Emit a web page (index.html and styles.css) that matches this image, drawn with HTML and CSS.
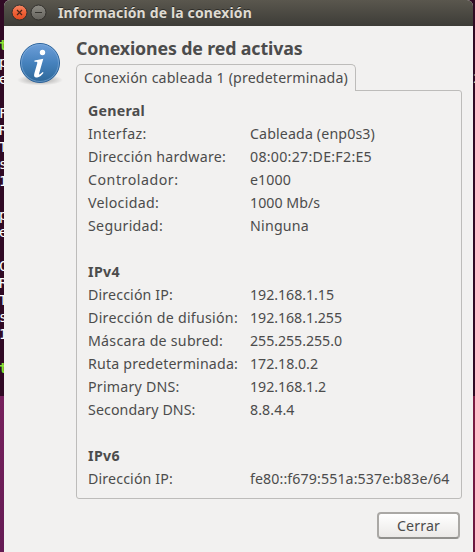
FILE: index.html
```html
<!DOCTYPE html>
<html lang="es">
<head>
<meta charset="utf-8">
<title>Información de la conexión</title>
<link rel="stylesheet" href="styles.css">
</head>
<body>
<div class="desktop">
  <div class="terminal">
    <pre class="output"><b>t</b>
p
e

F
R
T
s
1

p
e

C
R
T
s
1

<b>t</b></pre>
  </div>
  <div class="terminal-edge"><span>2</span></div>
  <main class="window">
    <header class="titlebar">
      <svg class="control" viewBox="0 0 17 17">
        <defs>
          <linearGradient id="close" x2="0" y2="1"><stop stop-color="#f58765"/><stop offset=".5" stop-color="#ef6238"/><stop offset="1" stop-color="#df4b22"/></linearGradient>
          <linearGradient id="mini" x2="0" y2="1"><stop stop-color="#8e8c85"/><stop offset="1" stop-color="#64625c"/></linearGradient>
        </defs>
        <circle cx="8.5" cy="8.5" r="7.5" fill="url(#close)" stroke="#33312d"/>
        <path d="M6 6l5 5M11 6l-5 5" stroke="#4d2518" stroke-width="1.2"/>
      </svg>
      <svg class="control" viewBox="0 0 17 17">
        <circle cx="8.5" cy="8.5" r="7.5" fill="url(#mini)" stroke="#33312d"/>
        <path d="M5 8.5h7" stroke="#34332e"/>
      </svg>
      <h1 class="title"><span data-width="194">Información de la conexión</span></h1>
    </header>
    <div class="content">
      <svg class="info" viewBox="0 0 48 48">
        <defs>
          <linearGradient id="blue" x2="0" y2="1"><stop stop-color="#6e9fd9"/><stop offset=".5" stop-color="#4682bd"/><stop offset="1" stop-color="#2d6798"/></linearGradient>
          <radialGradient id="shade"><stop stop-color="#000" stop-opacity=".35"/><stop offset="1" stop-color="#000" stop-opacity="0"/></radialGradient>
        </defs>
        <ellipse cx="24" cy="40" rx="23" ry="5.5" fill="url(#shade)"/>
        <circle cx="24" cy="23" r="19.5" fill="url(#blue)" stroke="#2c639b"/>
        <circle cx="24" cy="23" r="18.5" fill="none" stroke="#8ab4e0" stroke-opacity=".55"/>
        <circle cx="26.5" cy="12.5" r="2.7" fill="#fff"/>
        <path d="M18.5 20.6l8.8-1.8-4.1 14.4c-.5 2 .6 1.7 3.5-1.2l.9.8c-3.2 4.3-6 5-7.7 4.7-1.8-.3-2.2-1.9-1.5-4.3l2.8-9.8c.5-1.7-.5-1.8-2.8-1.6z" fill="#fff"/>
      </svg>
      <section class="connections">
        <h2 class="heading"><span data-width="226.5">Conexiones de red activas</span></h2>
        <div class="tab"><span data-width="264">Conexión cableada 1 (predeterminada)</span></div>
        <div class="panel">
          <h3><span data-width="57">General</span></h3>
          <dl>
            <dt><span data-width="58.5">Interfaz:</span></dt><dd><span data-width="125">Cableada (enp0s3)</span></dd>
            <dt><span data-width="138">Dirección hardware:</span></dt><dd><span data-width="122">08:00:27:DE:F2:E5</span></dd>
            <dt><span data-width="90.5">Controlador:</span></dt><dd><span data-width="41">e1000</span></dd>
            <dt><span data-width="71">Velocidad:</span></dt><dd><span data-width="70">1000 Mb/s</span></dd>
            <dt><span data-width="75">Seguridad:</span></dt><dd><span data-width="59">Ninguna</span></dd>
          </dl>
          <h3><span data-width="32">IPv4</span></h3>
          <dl>
            <dt><span data-width="85">Dirección IP:</span></dt><dd><span data-width="84">192.168.1.15</span></dd>
            <dt><span data-width="150">Dirección de difusión:</span></dt><dd><span data-width="92">192.168.1.255</span></dd>
            <dt><span data-width="135">Máscara de subred:</span></dt><dd><span data-width="92">255.255.255.0</span></dd>
            <dt><span data-width="150">Ruta predeterminada:</span></dt><dd><span data-width="68">172.18.0.2</span></dd>
            <dt><span data-width="91.5">Primary DNS:</span></dt><dd><span data-width="76">192.168.1.2</span></dd>
            <dt><span data-width="107.5">Secondary DNS:</span></dt><dd><span data-width="44.5">8.8.4.4</span></dd>
          </dl>
          <h3><span data-width="32">IPv6</span></h3>
          <dl>
            <dt><span data-width="85">Dirección IP:</span></dt><dd><span data-width="199.5">fe80::f679:551a:537e:b83e/64</span></dd>
          </dl>
        </div>
        <button class="close-button"><span data-width="43">Cerrar</span></button>
      </section>
    </div>
  </main>
</div>
<script src="script.js"></script>
</body>
</html>
```
FILE: styles.css
```css
* { box-sizing: border-box; }
body {
  margin: 0;
  font: 14.2px/23px "Noto Sans", sans-serif;
  color: #4c4c4c;
}
.desktop {
  position: relative;
  width: 475px;
  height: 552px;
  padding: 0 2px 0 4px;
  overflow: hidden;
  background: linear-gradient(#77215d, #651b54) 0 396px / 4px 156px no-repeat, linear-gradient(#7b1c42, #6b1740) 473px 396px / 2px 156px no-repeat, #300a24;
}
.terminal {
  position: absolute;
  left: 0;
  top: 0;
  width: 5px;
  height: 396px;
  overflow: hidden;
}
.output {
  margin: 37px 0 0 -1px;
  font: 14px/17px "DejaVu Sans Mono", monospace;
  color: #fff;
}
.output b { color: #8ae234; }
.terminal-edge {
  position: absolute;
  right: 0;
  top: 70px;
  width: 2px;
  height: 17px;
  overflow: hidden;
  font: 13px/17px "DejaVu Sans Mono", monospace;
  color: #e5c999;
}
.window {
  position: relative;
  height: 552px;
  background: #f2f1f0;
  border-radius: 6px 6px 0 0;
  overflow: hidden;
}
.titlebar {
  display: flex;
  align-items: center;
  height: 26px;
  padding: 0 0 1px 7px;
  gap: 2px;
  background: linear-gradient(#5a574e, #3d3c37);
}
.control { width: 17px; height: 17px; flex: none; }
.title {
  margin: 0 0 0 9px;
  font-size: 14px;
  line-height: 24px;
  color: #dfdbd2;
  text-shadow: 0 -1px #2d2c28;
}
.content { display: flex; padding: 14px 12px 0; }
.info { width: 48px; height: 48px; flex: none; }
.connections { display: flex; flex-direction: column; flex: 1; margin-left: 12px; }
.heading { margin: -3px 0 4px; font-size: 17.8px; line-height: 23px; }
.tab {
  position: relative;
  width: 280px;
  height: 27px;
  padding: 1px 7px 0;
  border: 1px solid #bdbcba;
  border-bottom: 0;
  border-radius: 5px 5px 0 0;
  background: #f2f1f0;
}
.panel {
  width: 386px;
  height: 409px;
  margin-top: -1px;
  padding: 8px 11px;
  border: 1px solid #bdbcba;
  border-radius: 0 3px 3px 3px;
}
.panel h3 { margin: 0; font-size: 14.2px; line-height: 23px; }
.panel dl {
  display: grid;
  grid-template-columns: 162px 1fr;
  grid-auto-rows: 23px;
  margin: 0 0 23px;
}
.panel dd { margin: 0; }
.close-button {
  align-self: flex-end;
  width: 83px;
  height: 27px;
  margin: 13px 2px 0 0;
  padding: 0;
  border: 2px solid #aaa8a5;
  border-bottom-color: #91908d;
  border-radius: 4px;
  background: linear-gradient(#fff, #ebe9e7);
  font: 14.2px/21px "Noto Sans", sans-serif;
  color: #4c4c4c;
}
[data-width] { display: inline-block; white-space: nowrap; }
```
FILE: script.js
```js
// Tracks every label to its nominal width.
for (const label of document.querySelectorAll("[data-width]")) {
  const natural = label.getBoundingClientRect().width;
  const count = label.textContent.length;
  label.style.letterSpacing = (label.dataset.width - natural) / count + "px";
}
```
